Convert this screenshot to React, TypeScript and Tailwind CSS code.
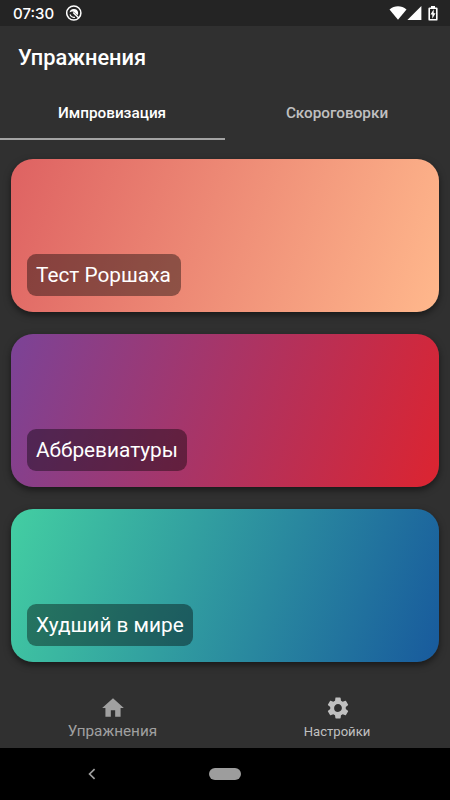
import React from "react";

const exercises = [
  { title: "Тест Роршаха", gradient: "bg-[linear-gradient(109.7deg,#de6262,#ffb88c)]", label: "w-[153.5px]" },
  { title: "Аббревиатуры", gradient: "bg-[linear-gradient(109.7deg,#7b4397,#dc2430)]", label: "w-[160px]" },
  { title: "Худший в мире", gradient: "bg-[linear-gradient(109.7deg,#43cea2,#185a9d)]", label: "w-[165.5px]" },
];

function StatusBar() {
  return (
    <div className="flex h-[26px] shrink-0 items-center bg-[#242424] pl-[13px] pr-[12px] text-white">
      <span className="w-[41px] whitespace-nowrap pt-[2px] font-['Inter',sans-serif] text-[15px] font-medium leading-[26px]">07:30</span>
      <svg className="ml-[12px]" width="16" height="16" viewBox="0 0 16 16" fill="none" stroke="#fff">
        <circle cx="7.8" cy="8" r="7.1" strokeWidth="1.5" />
        <path d="M3.5 7.6A4.4 4.4 0 0 1 12.2 8Q12.1 9.3 11.5 10.2L7.7 6.8Q5.6 6.2 3.5 7.6Z" fill="#fff" stroke="none" />
        <path d="M4 9.4A4.3 4.3 0 0 0 9 12.2" strokeWidth="1.1" />
        <path d="M7.2 7.5L12.8 13" strokeWidth="1.5" />
      </svg>
      <div className="ml-auto flex items-center">
        <svg width="18" height="14" viewBox="0 0 18 14" fill="#fff">
          <path d="M.5 3.4C5.6-.9 12.4-.9 17.5 3.4L9 13.8Z" />
        </svg>
        <svg width="15" height="14" viewBox="0 0 15 14" fill="#fff">
          <path d="M14.4 0V14H.4Z" />
        </svg>
        <svg className="ml-[6px]" width="10" height="15" viewBox="0 0 10 15">
          <path d="M3 0H7V1.4H8.4Q9.6 1.4 9.6 2.6V13.4Q9.6 14.6 8.4 14.6H1.6Q.4 14.6 .4 13.4V2.6Q.4 1.4 1.6 1.4H3Z" fill="#fff" />
          <path d="M2 3H8V13H2Z" fill="#242424" />
          <path d="M5.7 3.3L2.5 8.5H4.3V12.7L7.5 7.3H5.7Z" fill="#fff" />
        </svg>
      </div>
    </div>
  );
}

export default function App() {
  return (
    <div className="flex h-[800px] w-[450px] flex-col overflow-hidden bg-[#303030] font-['Roboto',sans-serif] text-white">
      <StatusBar />
      <header className="flex h-[62px] shrink-0 items-center pl-[18px] pt-[2px]">
        <h1 className="text-[21.8px] font-medium leading-[26px]">Упражнения</h1>
      </header>
      <nav className="flex h-[52px] shrink-0 text-[15.3px] font-medium">
        <div className="flex w-1/2 items-center justify-center border-b-2 border-[#a3a3a3] pr-px">Импровизация</div>
        <div className="flex w-1/2 items-center justify-center border-b-2 border-transparent pr-px text-[#c0c0c0]">Скороговорки</div>
      </nav>
      <main className="flex flex-1 flex-col gap-[21.5px] px-[11px] pt-[18.5px]">
        {exercises.map((e) => (
          <section
            key={e.title}
            className={`flex h-[153.5px] shrink-0 items-end rounded-[22px] pb-[16.5px] pl-4 shadow-[0_3px_7px_rgba(0,0,0,0.5)] ${e.gradient}`}
          >
            <div className={`flex h-[41.5px] items-center whitespace-nowrap rounded-[9px] bg-black/40 pl-[9px] pt-[2px] text-[20.8px] ${e.label}`}>
              {e.title}
            </div>
          </section>
        ))}
      </main>
      <footer className="flex h-[61px] shrink-0">
        <div className="flex w-1/2 flex-col items-center pt-[8px] text-[#a0a0a0]">
          <svg width="26" height="26" viewBox="0 0 24 24" fill="currentColor">
            <path d="M10 20v-6h4v6h5v-8h3L12 3 2 12h3v8z" />
          </svg>
          <span className="text-[15.3px] leading-[20px]">Упражнения</span>
        </div>
        <div className="flex w-1/2 flex-col items-center pt-[8px] text-[#c0c0c0]">
          <svg width="26" height="26" viewBox="0 0 24 24" fill="currentColor">
            <path d="M19.14 12.94c.04-.3.06-.61.06-.94 0-.32-.02-.64-.07-.94l2.03-1.58a.49.49 0 0 0 .12-.61l-1.92-3.32a.488.488 0 0 0-.59-.22l-2.39.96c-.5-.38-1.03-.7-1.62-.94l-.36-2.54a.484.484 0 0 0-.48-.41h-3.84c-.24 0-.43.17-.47.41l-.36 2.54c-.59.24-1.13.57-1.62.94l-2.39-.96c-.22-.08-.47 0-.59.22L2.74 8.87c-.12.21-.08.47.12.61l2.03 1.58c-.05.3-.09.63-.09.94s.02.64.07.94l-2.03 1.58a.49.49 0 0 0-.12.61l1.92 3.32c.12.22.37.29.59.22l2.39-.96c.5.38 1.03.7 1.62.94l.36 2.54c.05.24.24.41.48.41h3.84c.24 0 .44-.17.47-.41l.36-2.54c.59-.24 1.13-.56 1.62-.94l2.39.96c.22.08.47 0 .59-.22l1.92-3.32c.12-.22.07-.47-.12-.61zM12 15.6A3.61 3.61 0 0 1 8.4 12c0-1.98 1.62-3.6 3.6-3.6s3.6 1.62 3.6 3.6-1.62 3.6-3.6 3.6z" />
          </svg>
          <span className="pr-px text-[13.1px] leading-[22px]">Настройки</span>
        </div>
      </footer>
      <div className="flex h-[52px] shrink-0 items-center bg-black pl-[88px]">
        <svg width="8" height="12" viewBox="0 0 8 12" fill="none" stroke="#a0a0a0" strokeWidth="1.7">
          <path d="M6.6 1.2L1.6 6L6.6 10.8" />
        </svg>
        <div className="ml-[113px] h-[12px] w-[32px] rounded-full bg-[#9d9d9d]" />
      </div>
    </div>
  );
}
